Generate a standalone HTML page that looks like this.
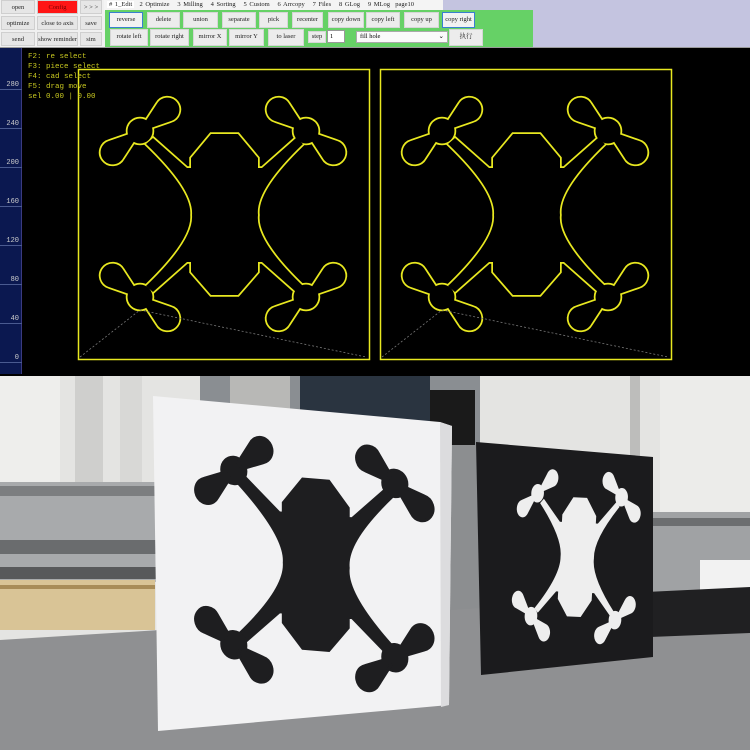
<!DOCTYPE html>
<html><head><meta charset="utf-8"><style>
*{margin:0;padding:0;box-sizing:border-box}
body{width:750px;height:750px;overflow:hidden;background:#000;position:relative;font-family:"Liberation Serif","Noto Serif CJK SC",serif}
.a{position:absolute}
.b{position:absolute;background:#e6e6e6;border:1px solid #cfcfcf;font-size:6.5px;color:#222;text-align:center;line-height:13px;white-space:nowrap;overflow:hidden}
.g{position:absolute;background:#ececec;border:1px solid #d6d6d6;font-size:6.5px;color:#222;text-align:center;line-height:14px;white-space:nowrap}
.sel{border:1.5px solid #3a7fd0;background:#f2f2f2}
.r{position:absolute;left:0;width:22px;color:#ccc;font-size:7px;font-family:"Liberation Mono",monospace;text-align:right;padding-right:3px;border-bottom:1px solid #4a5a90;height:10px;line-height:10px}
.t{position:absolute;left:28px;color:#c8c820;font-size:7.5px;font-family:"Liberation Mono",monospace;line-height:10px;white-space:nowrap}
</style></head><body>
<div class="a" style="left:0;top:0;width:750px;height:48px;background:#c4c4e0"></div>
<div class="a" style="left:0;top:0;width:105px;height:48px;background:#f0f0f0"></div>
<div class="a" style="left:104px;top:0;width:339px;height:11px;background:#f4f4f4"></div>
<div class="a" style="left:105px;top:10px;width:428px;height:37px;background:#66d166"></div>
<div class="a" style="left:0;top:47px;width:750px;height:1px;background:#9a9a9a"></div>
<div class="b" style="left:1px;top:0;width:34px;height:14px">open</div>
<div class="b" style="left:37px;top:0;width:41px;height:14px;background:#ff1515;color:#700">Config</div>
<div class="b" style="left:80px;top:0;width:22px;height:14px">&gt; &gt; &gt;</div>
<div class="b" style="left:1px;top:16px;width:34px;height:14px">optimize</div>
<div class="b" style="left:37px;top:16px;width:41px;height:14px">close to axis</div>
<div class="b" style="left:80px;top:16px;width:22px;height:14px">save</div>
<div class="b" style="left:1px;top:32px;width:34px;height:14px">send</div>
<div class="b" style="left:37px;top:32px;width:41px;height:14px">show reminder</div>
<div class="b" style="left:80px;top:32px;width:22px;height:14px">sim</div>
<div class="a" style="left:107px;top:0;font-size:6.5px;line-height:10px;color:#222;white-space:nowrap;word-spacing:1px">
<span style="background:#fff;padding:0 2px"># 1_Edit</span>&nbsp;&nbsp;2 Optimize&nbsp;&nbsp;&nbsp;3 Milling&nbsp;&nbsp;&nbsp;4 Sorting&nbsp;&nbsp;&nbsp;5 Custom&nbsp;&nbsp;&nbsp;6 Arrcopy&nbsp;&nbsp;&nbsp;7 Files&nbsp;&nbsp;&nbsp;8 GLog&nbsp;&nbsp;&nbsp;9 MLog&nbsp;&nbsp;page10</div>
<div class="g sel" style="left:109px;top:12px;width:34px;height:16px">reverse</div>
<div class="g" style="left:147px;top:12px;width:33px;height:16px">delete</div>
<div class="g" style="left:183px;top:12px;width:35px;height:16px">union</div>
<div class="g" style="left:222px;top:12px;width:34px;height:16px">separate</div>
<div class="g" style="left:259px;top:12px;width:29px;height:16px">pick</div>
<div class="g" style="left:292px;top:12px;width:31px;height:16px">recenter</div>
<div class="g" style="left:328px;top:12px;width:36px;height:16px">copy down</div>
<div class="g" style="left:366px;top:12px;width:34px;height:16px">copy left</div>
<div class="g" style="left:404px;top:12px;width:35px;height:16px">copy up</div>
<div class="g sel" style="left:442px;top:12px;width:33px;height:16px">copy right</div>
<div class="g" style="left:110px;top:29px;width:38px;height:17px">rotate left</div>
<div class="g" style="left:150px;top:29px;width:39px;height:17px">rotate right</div>
<div class="g" style="left:193px;top:29px;width:34px;height:17px">mirror X</div>
<div class="g" style="left:229px;top:29px;width:35px;height:17px">mirror Y</div>
<div class="g" style="left:268px;top:29px;width:36px;height:17px">to laser</div>
<div class="g" style="left:308px;top:31px;width:18px;height:12px;line-height:10px">step</div>
<div class="a" style="left:327px;top:30px;width:18px;height:13px;background:#fff;border:1px solid #999;font-size:6.5px;line-height:11px;padding-left:2px">1</div>
<div class="a" style="left:356px;top:31px;width:92px;height:12px;background:#fafafa;border:1px solid #aaa;font-size:6.5px;line-height:10px;padding-left:3px">fill hole<span style="position:absolute;right:3px">⌄</span></div>
<div class="g" style="left:449px;top:29px;width:34px;height:17px">执行</div>
<div class="a" style="left:0;top:48px;width:22px;height:326px;background:#0b1850;border-right:1px solid #3a3a80"></div>
<div class="r" style="top:80px">280</div>
<div class="r" style="top:119px">240</div>
<div class="r" style="top:158px">200</div>
<div class="r" style="top:197px">160</div>
<div class="r" style="top:236px">120</div>
<div class="r" style="top:275px">80</div>
<div class="r" style="top:314px">40</div>
<div class="r" style="top:353px">0</div>
<svg class="a" style="left:0;top:0" width="750" height="750" viewBox="0 0 750 750">
<defs>
<path id="bl" d="M8,-3.5 L30,-11 A12,12 0 1 1 30,11 L8,3.5 Z"/>
<g id="parts">
<path d="M146,144 L153,138 L187,168 L191,168 L191,158 L211,134 L238,134 L258,158 L258,168 L262,168 L296,138 L303,144 Q255,190 258,215 Q255,240 303,286 L296,292 L262,262 L258,262 L258,272 L238,295 L211,295 L191,272 L191,262 L187,262 L153,292 L146,286 Q194,240 192,215 Q194,190 146,144 Z"/>
<circle cx="140" cy="131" r="12.5"/><circle cx="306" cy="131" r="12.5"/><circle cx="140" cy="297" r="12.5"/><circle cx="306" cy="297" r="12.5"/>
<use href="#bl" transform="translate(140,131) rotate(-38)"/>
<use href="#bl" transform="translate(140,131) rotate(142)"/>
<use href="#bl" transform="translate(306,131) rotate(-142)"/>
<use href="#bl" transform="translate(306,131) rotate(38)"/>
<use href="#bl" transform="translate(140,297) rotate(38)"/>
<use href="#bl" transform="translate(140,297) rotate(-142)"/>
<use href="#bl" transform="translate(306,297) rotate(-38)"/>
<use href="#bl" transform="translate(306,297) rotate(142)"/>
</g>
<g id="cad">
<rect x="78.5" y="69.5" width="291" height="290" fill="none" stroke="#e8e820" stroke-width="1.5"/>
<use href="#parts" fill="#e8e820" stroke="#e8e820" stroke-width="3.5"/>
<use href="#parts" fill="#000" stroke="none"/>
<path d="M80,357 L140,310 L366,357" fill="none" stroke="#777" stroke-width="0.8" stroke-dasharray="2,2"/>
</g>
</defs>
<use href="#cad"/>
<use href="#cad" transform="translate(302,0)"/>
<rect x="0" y="376" width="750" height="374" fill="#e4e4e2"/>
<rect x="0" y="376" width="60" height="140" fill="#eeeeec"/>
<rect x="75" y="376" width="28" height="120" fill="#cfcfcd"/>
<rect x="120" y="376" width="22" height="120" fill="#d8d8d6"/>
<rect x="630" y="376" width="10" height="140" fill="#bdbdbb"/>
<rect x="660" y="376" width="90" height="150" fill="#ececea"/>
<rect x="200" y="376" width="280" height="70" fill="#8a8e92"/>
<rect x="300" y="376" width="130" height="75" fill="#2a3440"/>
<rect x="230" y="376" width="60" height="55" fill="#b8b8b6"/>
<rect x="430" y="390" width="45" height="60" fill="#1a1a1a"/>
<rect x="0" y="482" width="160" height="100" fill="#a8aaac"/>
<rect x="0" y="486" width="160" height="10" fill="#7c7e80"/>
<rect x="0" y="540" width="160" height="14" fill="#6a6c6e"/>
<rect x="0" y="567" width="160" height="12" fill="#58595b"/>
<rect x="0" y="580" width="155" height="50" fill="#d9c496"/>
<rect x="0" y="585" width="155" height="4" fill="#a88c58"/>
<rect x="445" y="445" width="40" height="190" fill="#8c8e90"/>
<rect x="650" y="512" width="100" height="80" fill="#a0a2a4"/>
<rect x="650" y="518" width="100" height="8" fill="#6c6e70"/>
<rect x="700" y="560" width="50" height="40" fill="#f2f2f2"/>
<polygon points="0,640 160,630 450,610 750,590 750,750 0,750" fill="#8f9092"/>
<polygon points="646,592 750,587 750,633 650,637" fill="#202022"/>
<polygon points="476,442 653,457 653,657 481,675" fill="#1b1b1d"/>
<use href="#parts" fill="#eeeeee" transform="matrix(0.506 0.024 -0.04 0.74 472 393)"/>
<polygon points="153,396 440,422 452,426 449,705 158,731" fill="#f2f2f3"/>
<polygon points="440,422 452,426 449,705 441,707" fill="#dcdcde"/>
<use href="#parts" fill="#1e1e20" stroke="#1e1e20" stroke-width="3" transform="matrix(0.97 0.078 0 1.05 98 322)"/>
</svg>
<div class="t" style="top:52px">F2: re select</div>
<div class="t" style="top:62px">F3: piece select</div>
<div class="t" style="top:72px">F4: cad select</div>
<div class="t" style="top:82px">F5: drag move</div>
<div class="t" style="top:92px">sel 0.00 | 0.00</div>
</body></html>
